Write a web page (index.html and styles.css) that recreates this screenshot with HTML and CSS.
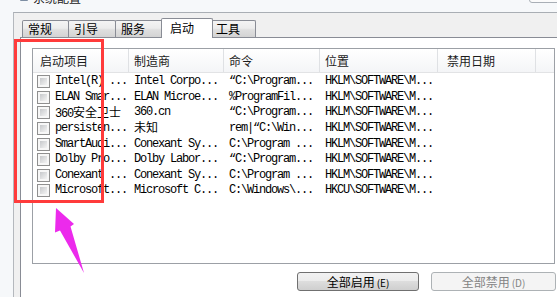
FILE: index.html
```html
<!DOCTYPE html>
<html lang="zh-CN">
<head>
<meta charset="utf-8">
<title>系统配置</title>
<link rel="stylesheet" href="styles.css">
</head>
<body>
<div class="window">
  <div class="titlebar">
    <svg class="app-icon" viewBox="0 0 10 10" width="10" height="10"><rect x="1" y="0" width="8" height="6" rx="1" fill="#7d8ea3"/><rect x="2" y="1" width="6" height="4" fill="#b9cde3"/></svg>
    <span class="title">系统配置</span>
    <span class="caption-btn"></span>
  </div>
  <div class="client">
    <div class="tabs">
      <div class="tab t1">常规</div>
      <div class="tab t2">引导</div>
      <div class="tab t3">服务</div>
      <div class="tab active">启动</div>
      <div class="tab t5">工具</div>
    </div>
    <div class="page">
      <div class="listview">
        <div class="lv-head">
          <div class="hcell c1">启动项目</div>
          <div class="hcell">制造商</div>
          <div class="hcell">命令</div>
          <div class="hcell">位置</div>
          <div class="hcell c5">禁用日期</div>
          <div class="hcell last"></div>
        </div>
        <div class="lv-body">
          <div class="row"><div class="cell c1"><span class="cb"></span><span>Intel(R) ...</span></div><div class="cell">Intel Corpo...</div><div class="cell">“C:\Program...</div><div class="cell">HKLM\SOFTWARE\M...</div></div>
          <div class="row"><div class="cell c1"><span class="cb"></span><span>ELAN Smar...</span></div><div class="cell">ELAN Microe...</div><div class="cell">%ProgramFil...</div><div class="cell">HKLM\SOFTWARE\M...</div></div>
          <div class="row"><div class="cell c1"><span class="cb"></span><span>360<span class="cjk">安全卫士</span></span></div><div class="cell">360.cn</div><div class="cell">“C:\Program...</div><div class="cell">HKLM\SOFTWARE\M...</div></div>
          <div class="row"><div class="cell c1"><span class="cb"></span><span>persisten...</span></div><div class="cell"><span class="cjk">未知</span></div><div class="cell">rem|“C:\Win...</div><div class="cell">HKLM\SOFTWARE\M...</div></div>
          <div class="row"><div class="cell c1"><span class="cb"></span><span>SmartAudi...</span></div><div class="cell">Conexant Sy...</div><div class="cell">C:\Program ...</div><div class="cell">HKLM\SOFTWARE\M...</div></div>
          <div class="row"><div class="cell c1"><span class="cb"></span><span>Dolby Pro...</span></div><div class="cell">Dolby Labor...</div><div class="cell">“C:\Program...</div><div class="cell">HKLM\SOFTWARE\M...</div></div>
          <div class="row"><div class="cell c1"><span class="cb"></span><span>Conexant ...</span></div><div class="cell">Conexant Sy...</div><div class="cell">C:\Program ...</div><div class="cell">HKLM\SOFTWARE\M...</div></div>
          <div class="row"><div class="cell c1"><span class="cb"></span><span>Microsoft...</span></div><div class="cell">Microsoft C...</div><div class="cell">C:\Windows\...</div><div class="cell">HKCU\SOFTWARE\M...</div></div>
        </div>
      </div>
      <div class="buttons">
        <div class="btn btn1">全部启用<span class="key">(E)</span></div>
        <div class="btn btn2">全部禁用<span class="key">(D)</span></div>
      </div>
    </div>
  </div>
</div>
<div class="mark"></div>
<svg class="arrow" width="40" height="75" viewBox="0 0 40 75"><polygon points="6,4 24,20 20.5,22.5 34,69 10,26.5 5,28.5" fill="#ec2aec"/></svg>
</body>
</html>
```

FILE: styles.css
```css
html, body {
  margin: 0;
  padding: 0;
}
body {
  width: 557px;
  height: 297px;
  overflow: hidden;
  position: relative;
  background: #f6f8fa;
  font-family: "Noto Sans CJK SC", sans-serif;
  color: #000;
}
.window {
  display: flex;
  flex-direction: column;
}
.titlebar {
  height: 12px;
  display: flex;
  align-items: flex-start;
  overflow: hidden;
}
.app-icon {
  margin: -5px 0 0 19px;
  flex: none;
}
.title {
  margin: -10px 0 0 4px;
  font-size: 12px;
  line-height: 16px;
  color: #1a1a1a;
}
.caption-btn {
  margin: -12px 0 0 auto;
  width: 40px;
  height: 15px;
  box-sizing: border-box;
  border: 1px solid #a9afb6;
  border-radius: 3px;
  background: #fbfbfb;
  transform: translateX(12px);
}
.client {
  margin-left: 13px;
  border-left: 1px solid #b4b8bd;
  border-top: 1px solid #a9aeb4;
  background: #f0f0f0;
  padding-left: 6px;
  height: 284px;
  overflow: hidden;
}
.tabs {
  height: 24px;
  display: flex;
  align-items: flex-end;
  padding-left: 2px;
}
.tab {
  position: relative;
  box-sizing: border-box;
  height: 17px;
  border: 1px solid #898c95;
  border-bottom: none;
  border-radius: 2px 2px 0 0;
  background: linear-gradient(#f4f4f4, #ececec 45%, #dfdfdf 55%, #d3d3d3);
  font-size: 12px;
  line-height: 15px;
  padding-left: 5px;
  color: #000;
}
.t1 { width: 47px; }
.t2 { width: 48px; margin-left: -1px; }
.t3 { width: 49px; margin-left: -1px; }
.tab.active {
  width: 52px;
  height: 20px;
  margin-left: -3px;
  margin-bottom: -1px;
  background: #fff;
  z-index: 2;
  padding-left: 8px;
  line-height: 17px;
}
.t5 { width: 46px; margin-left: -3px; }
.page {
  position: relative;
  z-index: 1;
  box-sizing: border-box;
  width: 560px;
  height: 262px;
  border: 1px solid #898c95;
  background: #fff;
  padding: 10px 0 0 11px;
}
.listview {
  box-sizing: border-box;
  width: 523px;
  height: 216px;
  border: 1px solid #9ca0a6;
  background: #fff;
}
.lv-head, .row {
  display: grid;
  grid-template-columns: 96px 95px 96px 118px 98px 1fr;
}
.lv-head {
  height: 24px;
  box-sizing: border-box;
  border-bottom: 1px solid #e2e3e5;
  background: linear-gradient(#ffffff, #f4f5f7);
}
.hcell {
  box-sizing: border-box;
  border-right: 1px solid #dfe1e4;
  font-size: 12px;
  line-height: 23px;
  padding-left: 5px;
  color: #1c1c1c;
  white-space: nowrap;
  overflow: hidden;
}
.hcell.c1 { padding-left: 7px; }
.hcell.c5 { padding-left: 9px; }
.hcell.last { border-right: none; }
.lv-body {
  padding-top: 1px;
}
.row {
  height: 15.57px;
  align-items: center;
}
.cell {
  padding-left: 5px;
  font-family: "Liberation Mono", "Noto Sans CJK SC", monospace;
  font-size: 12px;
  letter-spacing: -1.2px;
  line-height: 15px;
  white-space: nowrap;
  overflow: hidden;
  color: #000;
}
.cell.c1 {
  display: flex;
  align-items: center;
  gap: 5px;
  padding-left: 4px;
}
.cjk {
  font-family: "Noto Sans CJK SC", sans-serif;
  letter-spacing: 0;
}
.cb {
  flex: none;
  width: 13px;
  height: 13px;
  box-sizing: border-box;
  border: 1px solid #8f8f8f;
  padding: 2px;
  background: linear-gradient(135deg, #c6c8cb, #f4f4f4) content-box, #f7f7f7;
}
.buttons {
  display: flex;
  justify-content: flex-end;
  gap: 12px;
  width: 524px;
  margin-top: 8px;
}
.btn {
  box-sizing: border-box;
  height: 19px;
  border: 1px solid #707070;
  border-radius: 3px;
  background: linear-gradient(#f2f2f2, #ebebeb 50%, #dddddd 50%, #cfcfcf);
  font-size: 12px;
  line-height: 17px;
  text-align: center;
  color: #000;
}
.btn1 { width: 122px; }
.btn2 {
  width: 125px;
  border-color: #adb2b5;
  background: #f4f4f4;
  color: #838383;
}
.key {
  margin-left: 2px;
  font-size: 10px;
}
.mark {
  position: absolute;
  z-index: 10;
  left: 14px;
  top: 39px;
  width: 90px;
  height: 164px;
  box-sizing: border-box;
  border: 3px solid #ff3b3b;
}
.arrow {
  position: absolute;
  z-index: 10;
  left: 50px;
  top: 204px;
}
```
